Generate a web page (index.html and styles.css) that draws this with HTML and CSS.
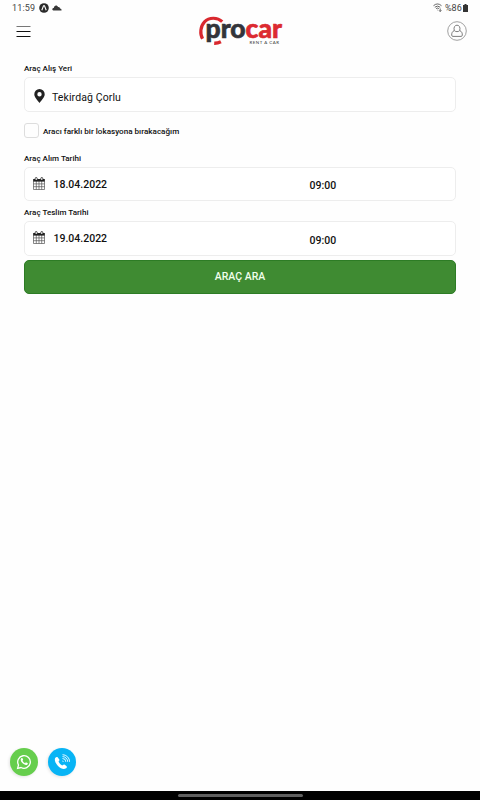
FILE: index.html
```html
<!DOCTYPE html>
<html lang="tr">
<head>
<meta charset="utf-8">
<title>Procar Rent a Car</title>
<link rel="stylesheet" href="styles.css">
</head>
<body>
<div class="status">
  <div class="status-left">
    <span class="clock">11:59</span>
    <svg class="app" width="10" height="10" viewBox="0 0 10 10"><circle cx="5" cy="5" r="4.8" fill="#292929"/><path d="M2.8 7.2 4.5 2.8h1L7.2 7.2" fill="none" stroke="#fff" stroke-width="1.1"/></svg>
    <svg class="cloud" width="10" height="6" viewBox="0 0 10 6"><path d="M1.4 5.5C-.2 5.3 0 3 1.8 3.1 2-.1 5.3-.2 6 2 7.5 1.8 8 2.6 8 3.5c1.5 0 1.6 1.4 1.5 2Z" fill="#383838"/></svg>
  </div>
  <div class="status-right">
    <svg width="10" height="9" viewBox="0 0 10 9" fill="none" stroke="#555" stroke-width=".9"><path d="M.5 2.7Q4.5-.8 8.5 2.7M1.8 4.2q2.7-2.2 5.4 0M3.1 5.6q1.4-1.1 2.8 0M4.5 7l.5.4M7.2 5.5v3M6 7.3l1.2 1.2L8.4 7.3"/></svg>
    <span class="percent">%86</span>
    <svg width="5" height="8" viewBox="0 0 5 8"><path d="M1.5 0h2v1H5v7H0V1h1.5Z" fill="#333"/></svg>
  </div>
</div>
<header class="header">
  <svg class="menu" width="15" height="12" viewBox="0 0 15 12"><path d="M.5 .5h14" stroke="#777"/><path d="M.5 5.5h14M.5 10.5h14" stroke="#111"/></svg>
  <svg class="logo" width="90" height="34" viewBox="0 0 90 34">
    <g fill="none" stroke="#d9282e" stroke-width="3.2">
      <path d="M4.600 23.800C1.600 18.800 2.400 11.200 6.500 6.900c4.600-4.800 12.800-4.900 17.700-.2"/>
      <path d="M16.200 28.200c2.300.1 4.400-.4 6.700-1.500" stroke-width="3.4"/>
    </g>
    <text class="logo-name" x="7.5" y="23" textLength="76.500" lengthAdjust="spacingAndGlyphs"><tspan class="dark">pro</tspan><tspan class="red">car</tspan></text>
    <text class="logo-sub" x="51.500" y="28.800" textLength="29.500">RENT A CAR</text>
  </svg>
  <svg class="user" width="20" height="20" viewBox="0 0 20 20" fill="none" stroke="#5c5c5c" stroke-width=".8"><circle cx="10" cy="10" r="9.3" stroke="#888"/><path d="M7.3 9.6C5.2 2.4 14.8 2.4 12.7 9.6 11.5 11 8.500 11 7.300 9.600ZM7 9.700C5.200 10.600 4.600 12.200 4.700 14.200q.1 1.200 1.200 1.200h8.200q1.100 0 1.200-1.200c.1-2-.5-3.600-2.300-4.500"/></svg>
</header>
<main class="form">
  <label class="label">Araç Alış Yeri</label>
  <div class="field place">
    <svg width="11" height="14" viewBox="0 0 11 14"><path fill="#222" fill-rule="evenodd" d="M5.5 0A5.2 5.2 0 0 0 .3 5.2C.3 8.3 3.7 11.4 5.5 14c1.8-2.6 5.2-5.7 5.2-8.8A5.2 5.2 0 0 0 5.5 0Zm0 3a2.2 2.2 0 1 1 0 4.4 2.2 2.2 0 0 1 0-4.4Z"/></svg>
    <span>Tekirdağ Çorlu</span>
  </div>
  <div class="check"><span class="box"></span><span>Aracı farklı bir lokasyona bırakacağım</span></div>
  <label class="label">Araç Alım Tarihi</label>
  <div class="field date">
    <svg class="cal" width="12" height="13" viewBox="0 0 12 13"><path d="M.5 2.5h11v10H.5ZM.5 6.9h11M.5 9.7h11M3.3 4v8.5M6 4v8.5M8.7 4v8.5" fill="none" stroke="#555" stroke-width=".7"/><path d="M.3 2h11.4v2.6H.3Z" fill="#222"/><path d="M2.2 3V1.5a1 1 0 0 1 2 0V3M7.8 3V1.5a1 1 0 0 1 2 0V3" fill="#fff" stroke="#222" stroke-width=".8"/></svg>
    <span class="day">18.04.2022</span><span class="time">09:00</span>
  </div>
  <label class="label second">Araç Teslim Tarihi</label>
  <div class="field date last">
    <svg class="cal" width="12" height="13" viewBox="0 0 12 13"><path d="M.5 2.5h11v10H.5ZM.5 6.9h11M.5 9.7h11M3.3 4v8.5M6 4v8.5M8.7 4v8.5" fill="none" stroke="#555" stroke-width=".7"/><path d="M.3 2h11.4v2.6H.3Z" fill="#222"/><path d="M2.2 3V1.5a1 1 0 0 1 2 0V3M7.8 3V1.5a1 1 0 0 1 2 0V3" fill="#fff" stroke="#222" stroke-width=".8"/></svg>
    <span class="day">19.04.2022</span><span class="time">09:00</span>
  </div>
  <button class="search">ARAÇ ARA</button>
</main>
<div class="contacts">
  <a class="contact whatsapp"><svg width="16" height="16" viewBox="0 0 16 16"><path d="m1.6 14.4.9-3.4A6.3 6.3 0 1 1 5 13.5Z" fill="none" stroke="#fff" stroke-width="1.3"/><path d="M5.3 4.3c.4-.5 1-.5 1.2 0l.6 1.3c.1.4-.5.9-.6 1.1.6 1.2 1.5 2 2.6 2.5.4-.2.8-1 1.1-.8l1.5.7c.3.3-.1 1.3-.6 1.6-1.4.8-3.2-.1-4.7-1.6-1.4-1.4-2.4-3.3-1.1-4.8Z" fill="#fff"/></svg></a>
  <a class="contact call"><svg width="16" height="16" viewBox="0 0 16 16"><path d="M1.2 4.1c.6-1.1 2-1.5 2.6-.7l1.5 2c.6.9-.6 1.7-.8 2.2.8 1.7 2 3 3.7 3.8.6-.2 1.5-1.4 2.2-.8l2 1.4c.9.8.4 2-.8 2.6-2.2 1.1-5.2-.3-7.6-2.7S.1 6.1 1.2 4.1Z" fill="#fff"/><path d="M8.5 7a.8.8 0 0 1 .8.8M8.5 4.5A3.3 3.3 0 0 1 11.8 7.8M8.5 2.6A5.2 5.2 0 0 1 13.7 7.8M8.5.7A7.1 7.1 0 0 1 15.6 7.8" fill="none" stroke="#fff" stroke-width=".9"/></svg></a>
</div>
<footer class="nav"><span class="handle"></span></footer>
</body>
</html>
```
FILE: styles.css
```css
* { box-sizing: border-box; }
body { margin: 0; height: 800px; display: flex; flex-direction: column; background: #fefefe; color: #111; font-family: Roboto, sans-serif; overflow: hidden; }
svg { display: block; flex: none; }
.status { height: 15px; padding: 0 12px; display: flex; justify-content: space-between; color: #444; font-size: 9px; line-height: 15px; }
.status-left, .status-right { display: flex; align-items: center; }
.clock { width: 27px; padding-top: 1px; letter-spacing: .15px; }
.cloud { margin-left: 3px; }
.percent { width: 18px; margin: 1px 0 0 2px; }
.header { height: 34px; padding: 0 13.5px 0 16px; display: grid; grid-template-columns: 1fr 90px 1fr; align-items: center; }
.logo { margin-left: 1.5px; overflow: visible; }
.user { justify-self: end; margin-top: -2px; }
.menu { margin-top: -1px; }
.logo-name { font: 900 26.5px Lato, sans-serif; stroke-width: .6px; }
.dark { fill: #33343a; stroke: #33343a; }
.red { fill: #dc2a30; stroke: #dc2a30; }
.logo-sub { font: 400 4.4px Lato, sans-serif; fill: #333; }
.form { padding: 14px 24px 0; display: flex; flex-direction: column; }
.label { height: 14px; font-size: 8.05px; font-weight: 500; line-height: 12px; }
.field { height: 35px; border: 1px solid #ededed; border-radius: 5px; background: #fff; display: flex; align-items: center; }
.place { padding: 5px 9px 0; gap: 7px; font-size: 10.5px; letter-spacing: .1px; }
.place svg { margin-top: -3px; }
.check { height: 15px; margin: 11px 0 15px; display: flex; align-items: center; gap: 4px; font-size: 8.1px; font-weight: 500; }
.box { width: 15px; height: 15px; border: 1px solid #ddd; border-radius: 3px; }
.date { height: 34px; padding-left: 8px; font-size: 10.5px; font-weight: 500; }
.last { height: 35px; }
.cal { margin-top: -2px; }
.day { width: 256px; margin-left: 8.5px; }
.time { padding-top: 3px; }
.second { margin-top: 6px; }
.search { height: 34px; padding: 0 0 1px; margin-top: 4px; border: 1px solid #2d7c25; border-radius: 5px; background: #3f8b32; color: #f1ffec; font: 500 10.5px Roboto, sans-serif; }
.contacts { margin-top: auto; padding: 0 0 15px 10px; display: flex; gap: 10.4px; }
.contact { width: 28px; height: 28px; border-radius: 50%; display: grid; place-items: center; box-shadow: -1px 1px 3px #e4e4e4; }
.whatsapp { background: #66ce4d; }
.call { background: #08b4f5; }
.nav { height: 9px; background: #000; display: flex; justify-content: center; align-items: center; }
.handle { width: 125px; height: 3px; border-radius: 2px; background: #606060; }
```
